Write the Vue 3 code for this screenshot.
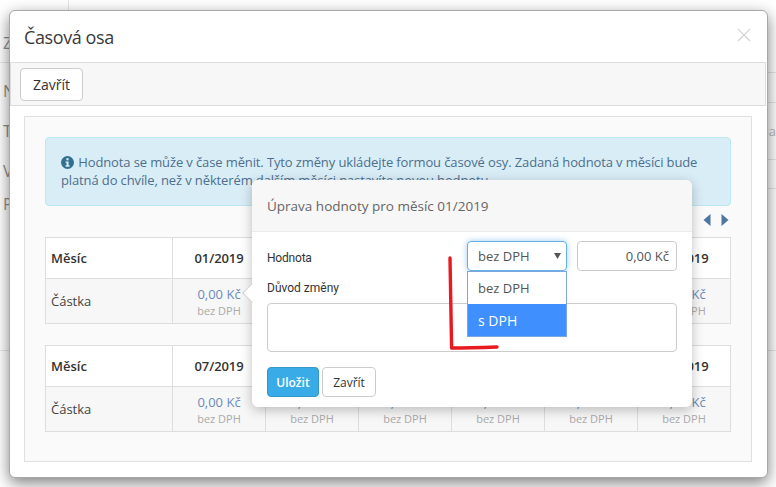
<script setup>
const tables = [
  ['01/2019', '02/2019', '03/2019', '04/2019', '05/2019', '06/2019'],
  ['07/2019', '08/2019', '09/2019', '10/2019', '11/2019', '12/2019']
]
const leftRows = [
  { h: 63, t: 'Z', line: true, pad: 10 }, { h: 56, t: 'N' }, { h: 24, t: 'T' }, { h: 56, t: 'V' }, { h: 10, t: 'P' }, { h: 142, t: '', line: true }
]
const rightRows = [{ h: 73, t: '' }, { h: 30, t: '' }, { h: 57, t: 'ia' }, { h: 29, t: '' }, { h: 162, t: '' }]
</script>

<template>
  <div class="screen">
    <div class="page">
      <div class="page-col">
        <div
          v-for="(r, i) in leftRows"
          :key="i"
          class="page-row"
          :class="{ 'has-line': r.line, 'at-end': r.pad }"
          :style="{ height: r.h + 'px' }"
        >{{ r.t }}</div>
      </div>
      <div class="page-col page-col-right">
        <div v-for="(r, i) in rightRows" :key="i" class="page-row has-line" :style="{ height: r.h + 'px' }">{{ r.t }}</div>
      </div>
    </div>

    <div class="modal">
      <header class="modal-head">
        <h1>Časová osa</h1>
        <svg class="close" width="14" height="14" viewBox="0 0 14 14">
          <path d="M1 1l12 12M13 1L1 13" stroke="#d4d4d4" stroke-width="1.2" fill="none" />
        </svg>
      </header>
      <div class="toolbar"><button class="btn">Zavřít</button></div>

      <div class="panel">
        <div class="alert">
          <svg class="info" width="13" height="13" viewBox="0 0 12 12">
            <circle cx="6" cy="6" r="6" fill="#31708f" />
            <rect x="5" y="2" width="2" height="2" fill="#d9edf7" />
            <path d="M4.2 5h2.8v3.6h.9V10H4.2V8.6h.9V6.2h-.9z" fill="#d9edf7" />
          </svg>
          Hodnota se může v čase měnit. Tyto změny ukládejte formou časové osy. Zadaná hodnota v měsíci bude
          platná do chvíle, než v některém dalším měsíci nastavíte novou hodnotu.
        </div>

        <div class="pager">
          <svg width="8" height="12" viewBox="0 0 8 12"><path d="M7.5 0v12L.5 6z" fill="#4f76a3" /></svg>
          <svg width="8" height="12" viewBox="0 0 8 12"><path d="M.5 0v12l7-6z" fill="#4f76a3" /></svg>
        </div>

        <div v-for="(months, ti) in tables" :key="ti" class="tbl">
          <div class="tr head">
            <div class="label strong">Měsíc</div>
            <div v-for="m in months" :key="m" class="cell strong">{{ m }}</div>
          </div>
          <div class="tr body">
            <div class="label">Částka</div>
            <div v-for="m in months" :key="m" class="cell">
              <span class="amount">0,00 Kč</span>
              <span class="tax">bez DPH</span>
            </div>
          </div>
        </div>
      </div>
    </div>

    <div class="popover">
      <span class="pop-arrow"></span>
      <div class="pop-title">Úprava hodnoty pro měsíc 01/2019</div>
      <div class="pop-body">
        <div class="line">
          <span class="lbl lbl-value">Hodnota</span>
          <div class="select">
            bez DPH
            <svg width="7" height="6" viewBox="0 0 7 6"><path d="M0 0h7L3.5 6z" fill="#555" /></svg>
            <div class="menu">
              <div class="opt">bez DPH</div>
              <div class="opt active">s DPH</div>
            </div>
          </div>
          <div class="money">0,00 Kč</div>
        </div>
        <div class="lbl reason">Důvod změny</div>
        <textarea class="area"></textarea>
        <div class="actions">
          <button class="btn btn-primary">Uložit</button>
          <button class="btn btn-small">Zavřít</button>
        </div>
      </div>
    </div>

    <svg class="scribble" width="60" height="100" viewBox="0 0 60 100">
      <path d="M2 2C2.4 30 2.8 60 3.6 92 18 92 32 91.6 49 91" stroke="#e8191f" stroke-width="3.4" fill="none" stroke-linecap="round" stroke-linejoin="round" />
    </svg>
  </div>
</template>

<style>
html, body { margin: 0; background: #fff; }
</style>

<style scoped>
* { box-sizing: border-box; }
.screen {
  position: relative;
  width: 776px;
  height: 487px;
  overflow: hidden;
  font-family: "Open Sans", "Liberation Sans", sans-serif;
  font-size: 13px;
  color: #333;
  background: #fff;
}
.page { display: flex; justify-content: space-between; height: 100%; }
.page-col { width: 69px; height: 351px; border-right: 1px solid #e6e6e6; }
.page-col-right { width: 20px; border-right: 0; }
.page-row {
  font-size: 16px;
  line-height: 20px;
  color: #8f8f8f;
  padding-left: 3px;
  display: flex;
  align-items: center;
}
.has-line { border-bottom: 1px solid #e6e6e6; }
.at-end { align-items: flex-end; padding-bottom: 9px; }
.page-col-right .page-row { padding-left: 0; font-size: 13px; color: #b8b8b8; justify-content: flex-end; }
.modal {
  position: absolute;
  left: 9px;
  top: 10px;
  width: 759px;
  height: 468px;
  background: #fff;
  border: 1px solid #a8a8a8;
  border-radius: 6px;
  box-shadow: 0 5px 15px rgba(0, 0, 0, .5);
}
.modal-head { height: 51px; padding: 0 15px 0 14px; display: flex; align-items: center; justify-content: space-between; }
.modal-head h1 { margin: 0; font-size: 18px; font-weight: 400; letter-spacing: -.4px; color: #3a3a3a; }
.close { margin: -3px 1px 0 0; }
.toolbar {
  height: 44px;
  margin-right: 1px;
  background: #f7f7f7;
  border: 1px solid #ddd;
  padding: 5px 9px;
}
.btn {
  font-family: inherit;
  font-size: 14px;
  height: 33px;
  width: 63px;
  padding: 0;
  background: #fff;
  color: #333;
  border: 1px solid #ccc;
  border-radius: 4px;
}
.panel {
  margin: 10px 15px 0 14px;
  height: 346px;
  background: #fafafa;
  border: 1px solid #e0e0e0;
  padding: 20px;
}
.alert {
  height: 69px;
  background: #d9edf7;
  border: 1px solid #bce8f1;
  border-radius: 4px;
  padding: 15px;
  line-height: 18px;
  letter-spacing: -.12px;
  color: #4d6f8c;
}
.info { vertical-align: -1.5px; margin-right: 1px; }
.pager { height: 31px; display: flex; justify-content: flex-end; gap: 10px; padding: 8px 2px 0 0; }
.tbl { border: 1px solid #ddd; margin-bottom: 21px; }
.tr { display: grid; grid-template-columns: 126px repeat(6, 93px); }
.head { height: 41px; background: #fff; border-bottom: 1px solid #ddd; }
.body { height: 44px; background: #f7f7f7; }
.label { padding-left: 5px; display: flex; align-items: center; color: #444; }
.strong { font-weight: 600; color: #333; }
.head .cell { letter-spacing: -.1px; }
.cell {
  border-left: 1px solid #ddd;
  display: flex;
  flex-direction: column;
  align-items: center;
  justify-content: center;
}
.amount { color: #6a8cbb; line-height: 18px; }
.tax { color: #aaa; font-size: 11px; line-height: 15px; }
.popover {
  position: absolute;
  left: 252px;
  top: 180px;
  width: 440px;
  height: 227px;
  background: #fff;
  border-radius: 6px;
  box-shadow: 0 3px 12px rgba(0, 0, 0, .25);
}
.pop-arrow {
  position: absolute;
  left: -7px;
  top: 106px;
  width: 14px;
  height: 14px;
  background: #fff;
  border: 1px solid #d0d0d0;
  border-width: 0 0 1px 1px;
  transform: rotate(45deg);
}
.pop-title {
  height: 52px;
  background: #f7f7f7;
  border-bottom: 1px solid #ebebeb;
  border-radius: 6px 6px 0 0;
  padding: 0 15px;
  display: flex;
  align-items: center;
  font-size: 13.5px;
  color: #666;
}
.pop-body { padding: 9px 15px; position: relative; }
.line { display: flex; align-items: center; height: 30px; gap: 10px; }
.lbl { font-family: Roboto, "Open Sans", sans-serif; font-size: 12px; color: #333; }
.line .lbl { flex: 1; }
.lbl-value { padding-top: 3px; letter-spacing: -.2px; }
.select {
  position: relative;
  width: 100px;
  height: 30px;
  border: 1px solid #66afe9;
  border-radius: 4px;
  box-shadow: 0 0 6px rgba(102, 175, 233, .6);
  padding: 0 10px;
  display: flex;
  align-items: center;
  justify-content: space-between;
  color: #555;
  background: #fff;
}
.select svg { margin-right: -5px; }
.menu {
  position: absolute;
  z-index: 2;
  left: -1px;
  top: 29px;
  width: 100px;
  height: 66px;
  background: #fff;
  border: 1px solid #7ba7dc;
}
.opt { height: 32px; padding: 0 10px; display: flex; align-items: center; color: #555; }
.opt.active { background: #3f8fff; color: #fff; font-size: 14px; }
.money {
  width: 100px;
  height: 30px;
  border: 1px solid #ccc;
  border-radius: 4px;
  padding: 0 7px;
  display: flex;
  align-items: center;
  justify-content: flex-end;
  color: #555;
}
.reason { margin-top: 9px; height: 23px; line-height: 17px; }
.area {
  display: block;
  width: 410px;
  height: 49px;
  border: 1px solid #ccc;
  border-radius: 4px;
  background: #fff;
  resize: none;
  margin: 0;
  padding: 0;
}
.actions { display: flex; gap: 3px; margin-top: 15px; }
.btn-primary {
  width: 52px;
  height: 30px;
  font-size: 12px;
  font-weight: 600;
  background: #39ace7;
  border-color: #3498c9;
  color: #fff;
}
.btn-small { width: 54px; height: 30px; font-size: 12px; }
.scribble { position: absolute; left: 448px; top: 256px; }
</style>
